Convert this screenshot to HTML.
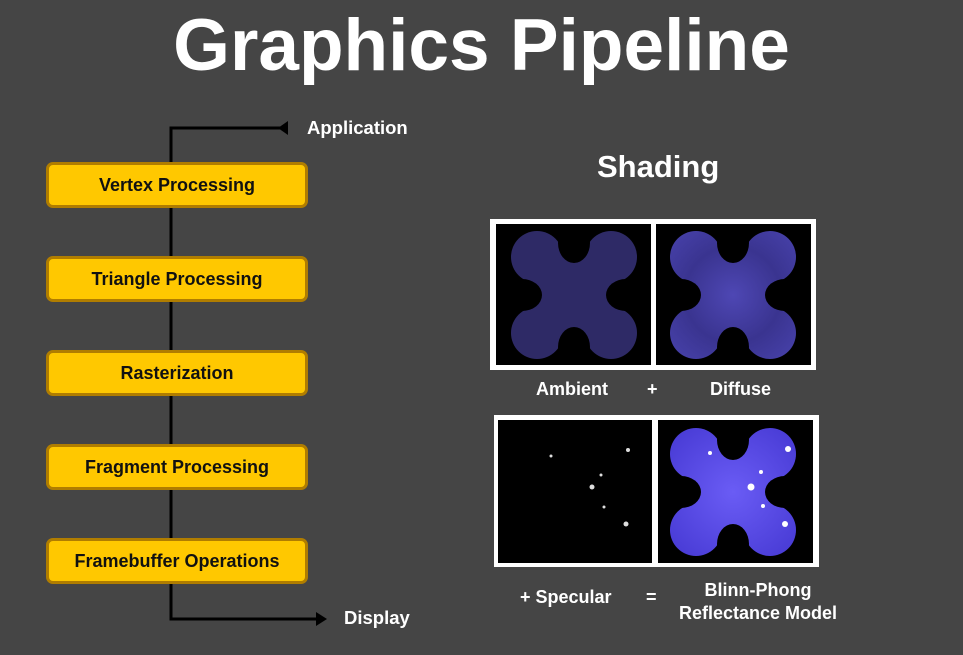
<!DOCTYPE html>
<html><head><style>
body{margin:0;width:963px;height:655px;background:#454545;position:relative;overflow:hidden;font-family:"Liberation Sans",sans-serif;font-weight:bold;color:#fff}
.t{position:absolute;white-space:nowrap}
.box{position:absolute;left:46px;width:256px;height:40px;background:#ffc800;border:3px solid #b07d00;border-radius:7px;color:#111;font-size:18px;text-align:center;line-height:40px}
</style></head><body>
<div class="t" style="left:0;width:963px;text-align:center;top:4px;font-size:73px;">Graphics Pipeline</div>
<svg style="position:absolute;left:0;top:0" width="963" height="655">
<polyline points="171,540 171,128 282,128" fill="none" stroke="#000" stroke-width="3"/>
<polygon points="278,128 288,121 288,135" fill="#000"/>
<polyline points="171,580 171,619 318,619" fill="none" stroke="#000" stroke-width="3"/>
<polygon points="327,619 316,612 316,626" fill="#000"/>
</svg>
<div class="t" style="left:307px;top:117px;font-size:18.5px">Application</div>
<div class="t" style="left:344px;top:607px;font-size:18.5px">Display</div>
<div class="box" style="top:162px">Vertex Processing</div>
<div class="box" style="top:256px">Triangle Processing</div>
<div class="box" style="top:350px">Rasterization</div>
<div class="box" style="top:444px">Fragment Processing</div>
<div class="box" style="top:538px">Framebuffer Operations</div>
<div class="t" style="left:597px;top:149px;font-size:31px">Shading</div>
<svg style="position:absolute;left:0;top:0" width="963" height="655">
<defs>
<mask id="m" maskUnits="userSpaceOnUse" x="-100" y="-100" width="200" height="200">
<g fill="#fff"><ellipse cx="-37" cy="-38" rx="26" ry="26"/><circle cx="37" cy="-38" r="26"/><circle cx="-37" cy="38" r="26"/><circle cx="37" cy="38" r="26"/><rect x="-40" y="-40" width="80" height="80"/></g>
<g fill="#000"><ellipse cx="0" cy="-52" rx="16" ry="20"/><ellipse cx="0" cy="52" rx="16" ry="20"/><ellipse cx="-52" cy="0" rx="20" ry="16"/><ellipse cx="52" cy="0" rx="20" ry="16"/></g>
</mask>
<radialGradient id="d" cx="0.5" cy="0.5" r="0.6"><stop offset="0" stop-color="#4e47b4"/><stop offset="0.5" stop-color="#3a3490"/><stop offset="1" stop-color="#4a44b0"/></radialGradient>
<radialGradient id="s" cx="0.5" cy="0.5" r="0.6"><stop offset="0" stop-color="#6a5cf5"/><stop offset="1" stop-color="#4336d0"/></radialGradient>
</defs>
<rect x="490" y="219" width="326" height="151" fill="#fff"/>
<rect x="496" y="224" width="155" height="141" fill="#000"/>
<rect x="656" y="224" width="155" height="141" fill="#000"/>
<g transform="translate(574,295)"><rect x="-80" y="-80" width="160" height="160" fill="#2e2a66" mask="url(#m)"/></g>
<g transform="translate(733,295)"><rect x="-80" y="-80" width="160" height="160" fill="url(#d)" mask="url(#m)"/></g>
<rect x="494" y="415" width="325" height="152" fill="#fff"/>
<rect x="498" y="420" width="154" height="143" fill="#000"/>
<rect x="658" y="420" width="155" height="143" fill="#000"/>
<g transform="translate(733,492)"><rect x="-80" y="-80" width="160" height="160" fill="url(#s)" mask="url(#m)"/></g>
<g fill="#ddd"><circle cx="551" cy="456" r="1.5"/><circle cx="628" cy="450" r="2"/><circle cx="601" cy="475" r="1.5"/><circle cx="592" cy="487" r="2.5"/><circle cx="604" cy="507" r="1.5"/><circle cx="626" cy="524" r="2.5"/></g>
<g fill="#fff"><circle cx="788" cy="449" r="3"/><circle cx="751" cy="487" r="3.5"/><circle cx="761" cy="472" r="2"/><circle cx="763" cy="506" r="2"/><circle cx="785" cy="524" r="3"/><circle cx="710" cy="453" r="2"/></g>
</svg>
<div class="t" style="left:536px;top:379px;font-size:18px">Ambient</div>
<div class="t" style="left:647px;top:379px;font-size:18px">+</div>
<div class="t" style="left:710px;top:379px;font-size:18px">Diffuse</div>
<div class="t" style="left:520px;top:587px;font-size:18px">+ Specular</div>
<div class="t" style="left:646px;top:587px;font-size:18px">=</div>
<div class="t" style="left:670px;top:579px;width:176px;text-align:center;font-size:18px;line-height:23px">Blinn-Phong<br>Reflectance Model</div>
</body></html>
